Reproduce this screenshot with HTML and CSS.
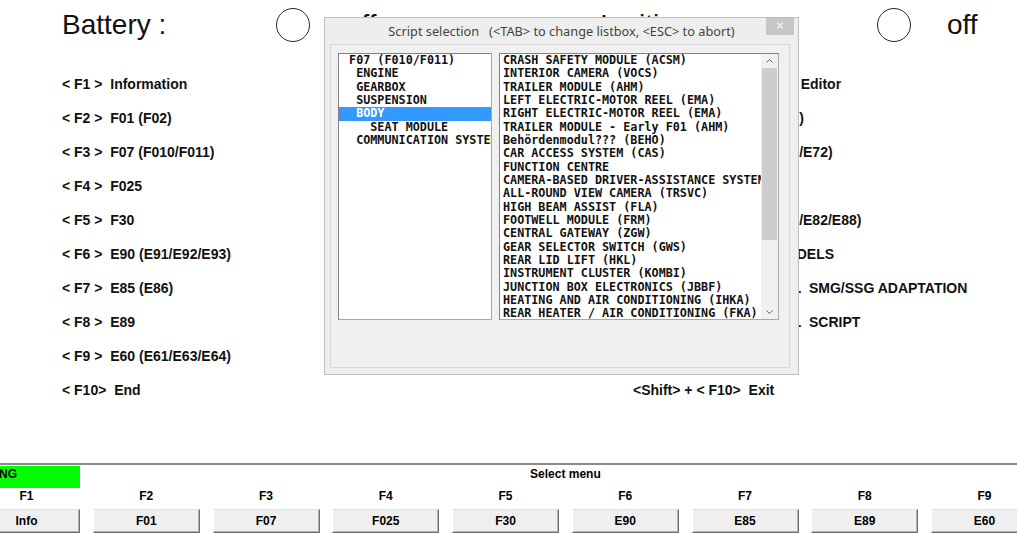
FILE: index.html
```html
<!DOCTYPE html>
<html lang="en">
<head>
<meta charset="utf-8">
<title>INPA - Select menu</title>
<link rel="stylesheet" href="styles.css">
</head>
<body>
<div class="screen">
  <header class="power">
    <span class="power-label">Battery :</span>
    <span class="lamp"></span>
    <span class="power-state">off</span>
    <span class="power-label">Ignition :</span>
    <span class="lamp"></span>
    <span class="power-state">off</span>
  </header>

  <main class="menu">
    <div class="menu-col">
      <div class="menu-row">&lt; F1 &gt;  Information</div>
      <div class="menu-row">&lt; F2 &gt;  F01 (F02)</div>
      <div class="menu-row">&lt; F3 &gt;  F07 (F010/F011)</div>
      <div class="menu-row">&lt; F4 &gt;  F025</div>
      <div class="menu-row">&lt; F5 &gt;  F30</div>
      <div class="menu-row">&lt; F6 &gt;  E90 (E91/E92/E93)</div>
      <div class="menu-row">&lt; F7 &gt;  E85 (E86)</div>
      <div class="menu-row">&lt; F8 &gt;  E89</div>
      <div class="menu-row">&lt; F9 &gt;  E60 (E61/E63/E64)</div>
      <div class="menu-row">&lt; F10&gt;  End</div>
    </div>
    <div class="menu-col">
      <div class="menu-row">&lt;Shift&gt; + &lt; F1&gt;  Coding   Editor</div>
      <div class="menu-row">&lt;Shift&gt; + &lt; F2&gt;  E65 (E66)</div>
      <div class="menu-row">&lt;Shift&gt; + &lt; F3&gt;  E70 (E71/E72)</div>
      <div class="menu-row">&lt;Shift&gt; + &lt; F4&gt;  R56</div>
      <div class="menu-row">&lt;Shift&gt; + &lt; F5&gt;  E87 (E81/E82/E88)</div>
      <div class="menu-row">&lt;Shift&gt; + &lt; F6&gt;  OLD MODELS</div>
      <div class="menu-row">&lt;Shift&gt; + &lt; F7&gt;  MANUAL  SMG/SSG ADAPTATION</div>
      <div class="menu-row">&lt;Shift&gt; + &lt; F8&gt;  MANUAL  SCRIPT</div>
      <div class="menu-row">&lt;Shift&gt; + &lt; F9&gt;  R50</div>
      <div class="menu-row">&lt;Shift&gt; + &lt; F10&gt;  Exit</div>
    </div>
  </main>

  <footer class="fbar">
    <div class="fgrid">
      <div class="status">
        <span class="run">RUNNING</span>
        <span class="prompt">Select menu</span>
      </div>
      <div class="fcell"><div class="fkey">F1</div><div class="fbtn">Info</div></div>
      <div class="fcell"><div class="fkey">F2</div><div class="fbtn">F01</div></div>
      <div class="fcell"><div class="fkey">F3</div><div class="fbtn">F07</div></div>
      <div class="fcell"><div class="fkey">F4</div><div class="fbtn">F025</div></div>
      <div class="fcell"><div class="fkey">F5</div><div class="fbtn">F30</div></div>
      <div class="fcell"><div class="fkey">F6</div><div class="fbtn">E90</div></div>
      <div class="fcell"><div class="fkey">F7</div><div class="fbtn">E85</div></div>
      <div class="fcell"><div class="fkey">F8</div><div class="fbtn">E89</div></div>
      <div class="fcell"><div class="fkey">F9</div><div class="fbtn">E60</div></div>
      <div class="fcell"><div class="fkey">F10</div><div class="fbtn">End</div></div>
    </div>
  </footer>

  <div class="dialog">
    <div class="titlebar">
      <span class="title">Script selection   (&lt;TAB&gt; to change listbox, &lt;ESC&gt; to abort)</span>
      <span class="close">×</span>
    </div>
    <div class="client">
      <div class="listbox tree">
        <div class="item"> F07 (F010/F011)</div>
        <div class="item">  ENGINE</div>
        <div class="item">  GEARBOX</div>
        <div class="item">  SUSPENSION</div>
        <div class="item selected">  BODY</div>
        <div class="item">    SEAT MODULE</div>
        <div class="item">  COMMUNICATION SYSTEM</div>
      </div>
      <div class="listbox modules">
        <div class="items">
          <div class="item">CRASH SAFETY MODULE (ACSM)</div>
          <div class="item">INTERIOR CAMERA (VOCS)</div>
          <div class="item">TRAILER MODULE (AHM)</div>
          <div class="item">LEFT ELECTRIC-MOTOR REEL (EMA)</div>
          <div class="item">RIGHT ELECTRIC-MOTOR REEL (EMA)</div>
          <div class="item">TRAILER MODULE - Early F01 (AHM)</div>
          <div class="item">Behördenmodul??? (BEHO)</div>
          <div class="item">CAR ACCESS SYSTEM (CAS)</div>
          <div class="item">FUNCTION CENTRE</div>
          <div class="item">CAMERA-BASED DRIVER-ASSISTANCE SYSTEM (KAFAS)</div>
          <div class="item">ALL-ROUND VIEW CAMERA (TRSVC)</div>
          <div class="item">HIGH BEAM ASSIST (FLA)</div>
          <div class="item">FOOTWELL MODULE (FRM)</div>
          <div class="item">CENTRAL GATEWAY (ZGW)</div>
          <div class="item">GEAR SELECTOR SWITCH (GWS)</div>
          <div class="item">REAR LID LIFT (HKL)</div>
          <div class="item">INSTRUMENT CLUSTER (KOMBI)</div>
          <div class="item">JUNCTION BOX ELECTRONICS (JBBF)</div>
          <div class="item">HEATING AND AIR CONDITIONING (IHKA)</div>
          <div class="item">REAR HEATER / AIR CONDITIONING (FKA)</div>
        </div>
        <div class="scrollbar">
          <div class="sb-arrow"><svg width="7" height="4" viewBox="0 0 7 4"><path d="M0.5 3.5 L3.5 0.5 L6.5 3.5" fill="none" stroke="#606060" stroke-width="1"/></svg></div>
          <div class="sb-thumb"></div>
          <div class="sb-track"></div>
          <div class="sb-arrow"><svg width="7" height="4" viewBox="0 0 7 4"><path d="M0.5 0.5 L3.5 3.5 L6.5 0.5" fill="none" stroke="#606060" stroke-width="1"/></svg></div>
        </div>
      </div>
    </div>
  </div>
</div>
</body>
</html>
```

FILE: styles.css
```css
html, body {
  margin: 0;
  padding: 0;
  background: #ffffff;
  overflow: hidden;
}

.screen {
  position: relative;
  width: 1017px;
  height: 534px;
  overflow: hidden;
  background: #ffffff;
  font-family: "Liberation Sans", Arial, sans-serif;
  color: #000;
}

/* ---------- Battery / Ignition header ---------- */
.power {
  display: grid;
  grid-template-columns: 214px 70px 254px 277px 70px auto;
  align-items: center;
  height: 49px;
  padding-left: 62px;
  font-size: 28px;
  line-height: 28px;
  color: #111;
}

.lamp {
  width: 32px;
  height: 32px;
  border: 1px solid #262626;
  border-radius: 50%;
  background: #fff;
}

/* ---------- main menu ---------- */
.menu {
  display: grid;
  grid-template-columns: 571px auto;
  margin-top: 18px;
  padding-left: 62px;
  font-size: 14px;
  font-weight: bold;
  line-height: 34px;
  white-space: pre;
  color: #111;
}

.menu-col {
  display: flex;
  flex-direction: column;
}

.menu-row {
  height: 34px;
}

/* ---------- function key bar ---------- */
.fbar {
  margin-top: 56px;
  border-top: 2px solid #8a8a8a;
  font-size: 12px;
  font-weight: bold;
}

.fgrid {
  display: grid;
  grid-template-columns: repeat(10, 107px);
  column-gap: 12.75px;
  margin-left: -27px;
  width: 1184.75px;
}

.status {
  grid-column: 1 / -1;
  display: grid;
  height: 22px;
  padding-top: 1px;
}

.run,
.prompt {
  grid-area: 1 / 1;
  line-height: 14px;
}

.run {
  justify-self: start;
  width: 107px;
  height: 22px;
  background: #00ff00;
  padding-top: 1px;
  box-sizing: border-box;
  text-indent: -12px;
  white-space: nowrap;
  overflow: hidden;
}

.prompt {
  justify-self: center;
  padding-top: 1px;
}

.fcell {
  display: flex;
  flex-direction: column;
}

.fkey {
  height: 16px;
  line-height: 16px;
  text-align: center;
}

.fbtn {
  margin-top: 5px;
  height: 24px;
  box-sizing: border-box;
  line-height: 22px;
  text-align: center;
  background: #efefef;
  border: 1px solid;
  border-color: #e2e2e2 #6e6e6e #6e6e6e #ffffff;
  box-shadow: inset -1px -1px 0 #b4b4b4;
}

/* ---------- dialog ---------- */
.dialog {
  position: absolute;
  left: 324px;
  top: 17px;
  width: 475px;
  height: 358px;
  box-sizing: border-box;
  border: 1px solid #bdbdbd;
  background: #eeeeee;
  display: flex;
  flex-direction: column;
}

.titlebar {
  position: relative;
  height: 26px;
  display: flex;
  align-items: center;
  justify-content: center;
  font-family: "Noto Sans", "Open Sans", sans-serif;
  font-size: 12.75px;
  color: #444;
  white-space: pre;
}

.close {
  position: absolute;
  top: 0;
  right: 4px;
  width: 28px;
  height: 17px;
  background: #c7c7c7;
  color: #fff;
  font-family: "DejaVu Sans", sans-serif;
  font-size: 11px;
  line-height: 16px;
  text-align: center;
}

.client {
  margin: 0 8px 0 5px;
  height: 324px;
  box-sizing: border-box;
  border: 1px solid #d8d8d8;
  background: #f0f0f0;
  padding: 8px 10px 0 7px;
  display: flex;
  gap: 7px;
}

.listbox {
  height: 267px;
  box-sizing: border-box;
  border: 1px solid #828282;
  border-right-color: #a8a8a8;
  border-bottom-color: #a8a8a8;
  background: #fff;
  overflow: hidden;
  font-family: "DejaVu Sans Mono", "Liberation Mono", monospace;
  font-weight: bold;
  font-size: 11.75px;
  line-height: 13.33px;
  color: #111;
}

.item {
  white-space: pre;
  overflow: hidden;
  padding-left: 3px;
}

.tree {
  width: 154px;
}

.selected {
  background: #3399ff;
  color: #fff;
}

.modules {
  width: 280px;
  display: flex;
}

.items {
  flex: 1;
  min-width: 0;
  overflow: hidden;
}

.scrollbar {
  width: 17px;
  flex: none;
  background: #f0f0f0;
  display: flex;
  flex-direction: column;
}

.sb-arrow {
  height: 14px;
  display: flex;
  align-items: center;
  justify-content: center;
}

.sb-thumb {
  height: 172px;
  margin: 0 1px;
  background: #cdcdcd;
}

.sb-track {
  flex: 1;
}
```
